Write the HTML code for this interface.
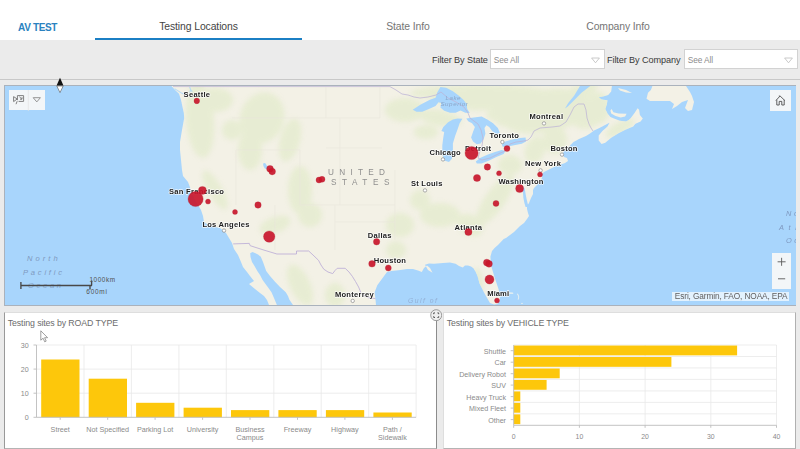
<!DOCTYPE html>
<html lang="en"><head><meta charset="utf-8"><title>AV TEST</title>
<style>
*{box-sizing:border-box;margin:0;padding:0}
html,body{width:800px;height:449px;overflow:hidden}
body{background:#ebebeb;font-family:"Liberation Sans",sans-serif;position:relative;color:#4a4a4a}
.hdr{position:absolute;left:0;top:0;width:800px;height:40px;background:#fff}
.brand{position:absolute;left:18px;top:21px;font-size:10px;font-weight:bold;color:#2a82c0;letter-spacing:-.35px;line-height:14px;white-space:nowrap}
.tab{position:absolute;top:19.5px;font-size:10.4px;line-height:14px;color:#757575;white-space:nowrap;text-align:center;width:207px;letter-spacing:-.1px}
.tab.on{color:#444}
.ul{position:absolute;left:95px;top:38.4px;width:207px;height:2.2px;background:#1b7fc4}
.bar{position:absolute;left:0;top:40px;width:800px;height:40.3px;background:#ebebeb;border-bottom:1.3px solid #c8c8c8}
.flabel{position:absolute;top:53.6px;font-size:9.15px;line-height:12px;color:#3a3a3a;white-space:nowrap;letter-spacing:-.1px}
.sel{position:absolute;top:49.2px;height:20px;background:#fff;border:1px solid #d2d2d2}
.sel span{position:absolute;left:2.8px;top:4.6px;font-size:8.3px;line-height:10px;color:#8c8c8c;letter-spacing:-.1px}
.sel svg{position:absolute;right:3.8px;top:6.6px}
.mapwrap{position:absolute;left:4px;top:85.3px;width:792.3px;height:220.4px;border:.8px solid #aab2bc;background:#a8d5fc;overflow:hidden}
.map{position:absolute;left:0;top:0;display:block}
.w{position:absolute;background:rgba(248,248,248,.94)}
.panel{position:absolute;top:312px;height:137px;background:#fff;border:1px solid #dedede;border-bottom:1px solid #b4b4b4;overflow:hidden}
.p1{border-left-color:#999;border-right-color:#8c8c8c}
.p2{border-right-color:#b0b0b0}
.panel svg{position:absolute;top:-1px}
.p1 svg{left:-.2px}
.p2 svg{left:-1.2px}
.ptitle{position:absolute;top:4px;left:2.6px;font-size:8.8px;line-height:12px;color:#6c6c6c;white-space:nowrap;letter-spacing:-.12px}
.attr{position:absolute;left:672.3px;top:291.8px;width:117px;height:9px;background:rgba(255,255,255,.68);font-size:8.3px;line-height:9px;color:#606060;white-space:nowrap;padding-left:2.5px;letter-spacing:-.12px}
</style></head><body>
<div class="hdr">
 <div class="brand">AV TEST</div>
 <div class="tab on" style="left:95px">Testing Locations</div>
 <div class="tab" style="left:304.5px">State Info</div>
 <div class="tab" style="left:514.5px">Company Info</div>
 <div class="ul"></div>
</div>
<div class="bar"></div>
<div class="flabel" style="left:432px">Filter By State</div>
<div class="sel" style="left:490px;width:115px"><span>See All</span><svg width="9" height="7" viewBox="0 0 9 7"><path d="M.6 1h7.8L4.5 5.8z" fill="none" stroke="#bdbdbd" stroke-width=".8"/></svg></div>
<div class="flabel" style="left:607px">Filter By Company</div>
<div class="sel" style="left:684px;width:113.6px"><span>See All</span><svg width="9" height="7" viewBox="0 0 9 7"><path d="M.6 1h7.8L4.5 5.8z" fill="none" stroke="#bdbdbd" stroke-width=".8"/></svg></div>

<div class="mapwrap"></div>
<div style="position:absolute;left:4.7px;top:86px;width:791.2px;height:219.2px;overflow:hidden">
<svg class="map" viewBox="5 86 791 219" width="791" height="219">
<defs><filter id="b" x="-30%" y="-30%" width="160%" height="160%"><feGaussianBlur stdDeviation="2.5"/></filter><filter id="s" x="-5%" y="-5%" width="110%" height="110%"><feGaussianBlur stdDeviation="0.45"/></filter><clipPath id="lc"><polygon points="171.5,86.0 175.0,90.0 179.0,93.8 181.0,100.0 182.5,107.0 183.8,113.0 184.2,118.0 182.0,130.0 180.0,142.0 180.0,150.0 181.0,160.0 182.0,170.0 183.0,176.0 188.0,182.0 191.0,190.0 194.0,198.0 198.0,205.0 201.0,210.0 203.0,216.0 204.0,222.0 210.0,226.0 220.0,228.0 226.0,233.0 229.0,238.0 232.0,243.0 234.0,249.0 238.0,255.0 241.0,262.0 243.0,267.0 247.0,272.0 250.0,276.0 254.0,281.0 249.0,284.0 255.0,289.0 260.0,293.0 264.0,296.0 267.0,300.0 269.0,305.0 376.0,305.0 375.5,299.5 374.6,292.3 377.3,285.2 382.6,278.0 387.0,272.0 391.5,271.0 396.0,270.5 400.4,270.0 407.0,269.0 413.0,269.0 418.0,270.5 421.8,272.0 424.0,268.0 427.0,265.6 430.0,268.0 432.5,272.7 428.0,270.0 425.0,264.7 429.0,263.5 434.0,263.8 443.0,263.0 450.0,262.5 455.6,263.8 459.0,266.0 462.8,267.4 465.0,265.5 468.0,265.6 471.0,266.5 473.4,268.3 475.5,271.5 477.5,276.0 478.6,280.0 479.5,283.4 481.8,288.0 484.0,292.5 486.8,297.5 490.0,303.0 494.0,304.5 497.5,304.0 499.5,301.0 500.0,297.7 499.5,293.0 498.4,288.8 496.5,283.0 494.8,278.0 493.0,272.0 491.0,265.6 490.4,256.7 492.0,251.0 494.8,247.8 498.0,245.0 503.7,239.0 506.0,238.0 510.0,235.0 514.0,232.0 518.0,228.0 520.0,226.0 524.0,223.0 527.0,219.0 529.0,216.0 528.0,213.0 527.0,209.0 527.0,206.0 529.0,203.0 531.0,198.0 533.0,194.0 533.0,190.0 534.0,188.0 536.0,186.0 538.0,184.0 540.0,181.0 542.0,178.0 542.0,174.0 544.0,172.0 548.0,170.0 552.0,168.0 556.0,166.0 561.0,164.5 565.0,163.0 568.0,161.0 567.0,158.0 564.0,157.0 562.0,154.0 564.5,151.0 568.0,148.0 570.5,145.0 573.5,142.0 579.0,139.0 586.0,136.0 590.0,133.5 594.0,130.5 599.4,128.1 606.0,124.4 609.5,122.8 607.5,126.5 602.4,131.0 598.7,135.5 598.7,140.6 601.6,144.0 605.3,142.8 611.2,137.7 618.5,133.3 625.9,129.6 633.2,126.6 635.4,123.7 640.6,121.5 642.8,118.6 639.9,114.9 639.1,109.7 637.6,108.3 634.7,112.7 631.0,117.8 628.8,120.0 625.9,121.5 620.0,120.8 614.0,118.6 610.4,117.0 607.5,113.4 605.3,109.0 606.8,104.6 607.5,100.2 601.6,99.4 598.7,97.2 603.0,96.5 608.2,95.0 611.2,91.4 611.9,86.0"/></clipPath></defs>
<rect x="5" y="86" width="791" height="219" fill="#a8d5fc"/>
<g filter="url(#s)">
<polygon points="171.5,86.0 175.0,90.0 179.0,93.8 181.0,100.0 182.5,107.0 183.8,113.0 184.2,118.0 182.0,130.0 180.0,142.0 180.0,150.0 181.0,160.0 182.0,170.0 183.0,176.0 188.0,182.0 191.0,190.0 194.0,198.0 198.0,205.0 201.0,210.0 203.0,216.0 204.0,222.0 210.0,226.0 220.0,228.0 226.0,233.0 229.0,238.0 232.0,243.0 234.0,249.0 238.0,255.0 241.0,262.0 243.0,267.0 247.0,272.0 250.0,276.0 254.0,281.0 249.0,284.0 255.0,289.0 260.0,293.0 264.0,296.0 267.0,300.0 269.0,305.0 376.0,305.0 375.5,299.5 374.6,292.3 377.3,285.2 382.6,278.0 387.0,272.0 391.5,271.0 396.0,270.5 400.4,270.0 407.0,269.0 413.0,269.0 418.0,270.5 421.8,272.0 424.0,268.0 427.0,265.6 430.0,268.0 432.5,272.7 428.0,270.0 425.0,264.7 429.0,263.5 434.0,263.8 443.0,263.0 450.0,262.5 455.6,263.8 459.0,266.0 462.8,267.4 465.0,265.5 468.0,265.6 471.0,266.5 473.4,268.3 475.5,271.5 477.5,276.0 478.6,280.0 479.5,283.4 481.8,288.0 484.0,292.5 486.8,297.5 490.0,303.0 494.0,304.5 497.5,304.0 499.5,301.0 500.0,297.7 499.5,293.0 498.4,288.8 496.5,283.0 494.8,278.0 493.0,272.0 491.0,265.6 490.4,256.7 492.0,251.0 494.8,247.8 498.0,245.0 503.7,239.0 506.0,238.0 510.0,235.0 514.0,232.0 518.0,228.0 520.0,226.0 524.0,223.0 527.0,219.0 529.0,216.0 528.0,213.0 527.0,209.0 527.0,206.0 529.0,203.0 531.0,198.0 533.0,194.0 533.0,190.0 534.0,188.0 536.0,186.0 538.0,184.0 540.0,181.0 542.0,178.0 542.0,174.0 544.0,172.0 548.0,170.0 552.0,168.0 556.0,166.0 561.0,164.5 565.0,163.0 568.0,161.0 567.0,158.0 564.0,157.0 562.0,154.0 564.5,151.0 568.0,148.0 570.5,145.0 573.5,142.0 579.0,139.0 586.0,136.0 590.0,133.5 594.0,130.5 599.4,128.1 606.0,124.4 609.5,122.8 607.5,126.5 602.4,131.0 598.7,135.5 598.7,140.6 601.6,144.0 605.3,142.8 611.2,137.7 618.5,133.3 625.9,129.6 633.2,126.6 635.4,123.7 640.6,121.5 642.8,118.6 639.9,114.9 639.1,109.7 637.6,108.3 634.7,112.7 631.0,117.8 628.8,120.0 625.9,121.5 620.0,120.8 614.0,118.6 610.4,117.0 607.5,113.4 605.3,109.0 606.8,104.6 607.5,100.2 601.6,99.4 598.7,97.2 603.0,96.5 608.2,95.0 611.2,91.4 611.9,86.0" fill="#f3f1e6"/>
<polygon points="646.5,98.7 648.0,92.8 650.9,89.9 652.4,86.0 686.0,86.0 690.0,92.0 692.0,96.0 694.0,102.0 692.0,110.0 688.0,111.0 685.0,108.0 688.0,100.0 682.0,102.0 677.0,106.0 672.0,109.0 674.0,104.0 670.0,101.0 660.0,101.0 650.0,101.0" fill="#f3f1e6"/>
<polygon points="611.6,109.0 613.4,112.3 618.5,113.6 626.6,113.8 625.1,116.6 620.7,117.6 615.6,116.0 611.2,113.4 610.4,110.5" fill="#f3f1e6"/>
<polygon points="618.0,88.0 626.0,90.0 632.0,93.0 626.0,92.5 620.0,90.5" fill="#f3f1e6"/>
<g clip-path="url(#lc)"><g filter="url(#b)" fill="#e0eac6" opacity=".6">
<ellipse cx="200" cy="120" rx="14" ry="38" transform="rotate(-5 200 120)"/>
<ellipse cx="215" cy="100" rx="18" ry="12" transform="rotate(0 215 100)"/>
<ellipse cx="262" cy="118" rx="22" ry="26" transform="rotate(20 262 118)"/>
<ellipse cx="250" cy="150" rx="12" ry="20" transform="rotate(0 250 150)"/>
<ellipse cx="290" cy="140" rx="10" ry="22" transform="rotate(15 290 140)"/>
<ellipse cx="300" cy="190" rx="12" ry="24" transform="rotate(0 300 190)"/>
<ellipse cx="215" cy="190" rx="7" ry="22" transform="rotate(-30 215 190)"/>
<ellipse cx="275" cy="225" rx="16" ry="8" transform="rotate(-20 275 225)"/>
<ellipse cx="310" cy="215" rx="12" ry="12" transform="rotate(0 310 215)"/>
<ellipse cx="440" cy="118" rx="22" ry="8" transform="rotate(10 440 118)"/>
<ellipse cx="470" cy="100" rx="40" ry="10" transform="rotate(5 470 100)"/>
<ellipse cx="530" cy="105" rx="45" ry="12" transform="rotate(-15 530 105)"/>
<ellipse cx="585" cy="115" rx="16" ry="14" transform="rotate(0 585 115)"/>
<ellipse cx="575" cy="95" rx="25" ry="8" transform="rotate(-25 575 95)"/>
<ellipse cx="555" cy="140" rx="12" ry="14" transform="rotate(0 555 140)"/>
<ellipse cx="620" cy="128" rx="16" ry="6" transform="rotate(-30 620 128)"/>
<ellipse cx="660" cy="94" rx="16" ry="6" transform="rotate(0 660 94)"/>
<ellipse cx="548" cy="112" rx="46" ry="20" transform="rotate(-12 548 112)"/>
<ellipse cx="598" cy="108" rx="12" ry="16" transform="rotate(0 598 108)"/>
<ellipse cx="480" cy="93" rx="70" ry="8" transform="rotate(0 480 93)"/>
<ellipse cx="515" cy="120" rx="20" ry="8" transform="rotate(0 515 120)"/>
<ellipse cx="535" cy="150" rx="10" ry="14" transform="rotate(20 535 150)"/>
<ellipse cx="510" cy="165" rx="12" ry="10" transform="rotate(0 510 165)"/>
<ellipse cx="495" cy="200" rx="10" ry="30" transform="rotate(35 495 200)"/>
<ellipse cx="470" cy="225" rx="14" ry="10" transform="rotate(30 470 225)"/>
<ellipse cx="440" cy="215" rx="20" ry="12" transform="rotate(0 440 215)"/>
<ellipse cx="400" cy="225" rx="14" ry="12" transform="rotate(0 400 225)"/>
<ellipse cx="420" cy="200" rx="10" ry="10" transform="rotate(0 420 200)"/>
<ellipse cx="478" cy="280" rx="5" ry="12" transform="rotate(-10 478 280)"/>
<ellipse cx="300" cy="285" rx="10" ry="22" transform="rotate(-25 300 285)"/>
<ellipse cx="335" cy="295" rx="10" ry="12" transform="rotate(0 335 295)"/>
<ellipse cx="405" cy="110" rx="20" ry="12" transform="rotate(0 405 110)"/>
<ellipse cx="426" cy="132" rx="12" ry="7" transform="rotate(0 426 132)"/>
<ellipse cx="396" cy="250" rx="10" ry="9" transform="rotate(0 396 250)"/>
<ellipse cx="232" cy="130" rx="10" ry="10" transform="rotate(0 232 130)"/>
</g></g>
<polygon points="276.9,305.0 274.0,298.0 271.5,292.3 267.0,286.0 262.6,279.9 260.0,275.0 257.3,271.0 254.5,266.0 252.0,262.0 250.5,257.0 250.2,253.2 252.5,252.0 255.5,253.2 258.0,254.5 260.8,256.7 263.0,262.0 266.2,271.0 270.0,276.0 275.0,281.7 280.0,287.0 285.8,292.3 288.0,296.0 289.3,299.5 293.0,305.0" fill="#a8d5fc"/>
<polygon points="412.7,109.8 420.3,104.7 429.9,99.7 435.6,97.8 437.2,92.6 440.4,86.9 446.2,87.8 452.9,91.3 458.6,95.5 463.4,99.7 466.7,104.1 467.2,108.9 469.7,113.1 465.3,112.7 460.5,110.4 455.7,112.7 450.0,112.7 444.2,110.8 440.4,107.4 441.4,103.1 438.5,102.2 435.6,106.0 428.9,108.9 422.2,111.8 416.5,111.8" fill="#a8d5fc"/>
<polygon points="462.4,118.8 459.6,123.2 457.7,129.0 455.2,135.7 452.9,143.4 452.9,151.0 451.9,158.7 449.0,162.1 444.2,160.6 442.3,153.9 442.3,145.3 443.3,137.6 444.2,131.9 441.4,130.9 443.3,127.1 448.1,122.3 452.9,119.4 457.7,118.5" fill="#a8d5fc"/>
<polygon points="466.3,118.5 473.9,117.5 481.6,116.5 487.3,119.4 493.1,123.2 497.9,128.0 499.8,132.8 496.5,134.2 492.1,130.9 489.2,127.1 486.4,125.2 484.5,128.0 485.4,133.8 483.5,139.5 480.6,143.4 476.8,144.3 473.0,141.4 471.1,137.6 473.0,131.9 474.9,127.1 472.0,123.2 468.2,121.3" fill="#a8d5fc"/>
<polygon points="475.8,161.5 480.6,157.7 487.3,154.8 495.0,152.0 501.7,150.1 505.5,151.0 503.6,153.9 496.9,156.8 489.2,160.6 481.6,163.5 476.8,163.5" fill="#a8d5fc"/>
<polygon points="501.7,144.3 505.5,141.4 512.2,139.5 519.9,138.0 525.6,137.6 526.0,141.4 521.8,143.7 514.1,145.3 506.5,146.8 502.7,146.8" fill="#a8d5fc"/>
<polygon points="590.3,86.0 581.5,92.8 574.1,100.2 567.5,106.8 565.0,108.5 568.2,103.1 574.1,95.8 580.0,86.0" fill="#a8d5fc"/>
<polygon points="523.0,186.0 524.8,189.0 525.6,194.0 526.6,199.0 527.8,204.0 528.5,207.0 525.6,207.0 524.4,203.0 523.4,198.0 523.0,193.0 522.2,189.0" fill="#a8d5fc"/>
<path d="M174.5 88.6L182.5 93.6L186.5 93.2M189.6 86.8L190.6 89.6L192.4 91.8M190.6 89.6L189.8 92.6" fill="none" stroke="#a8d5fc" stroke-width="1.1" opacity=".75"/>
<g fill="#eef3ee" opacity=".8"><ellipse cx="510.5" cy="293.2" rx="3" ry=".9"/><path d="M517.6 293.4q2.6 2.2 1 6.4l-1-.2q1.4-3.4-.8-5.6z"/><ellipse cx="522" cy="303.4" rx=".9" ry=".7"/></g>
<ellipse cx="265.2" cy="166" rx="1.6" ry="3.2" transform="rotate(-25 265.2 166)" fill="#a8d5fc"/>
<polyline points="233.2,243.9 249.3,243.4 250.2,245.7 263.0,249.8 276.9,254.0 296.5,254.0 296.5,251.0 308.7,251.0 313.0,255.0 318.5,260.3 321.0,265.0 323.8,269.2 328.0,272.0 332.7,273.6 335.0,270.5 337.2,268.3 345.2,268.3 349.0,272.0 352.3,276.3 355.5,281.5 358.6,287.0 360.0,290.5 361.3,294.0 365.0,296.0 368.4,297.7 375.5,298.6" fill="none" stroke="#b9a9d6" stroke-width=".8"/>
<polyline points="173.0,86.6 390.0,86.6 396.0,90.0 402.0,94.0 408.0,95.0 414.0,97.0 420.0,98.0 428.0,97.0 436.0,95.0 441.0,92.0 448.0,98.0 456.0,102.0 464.0,107.0 468.0,113.0 470.0,118.0 474.0,121.0 478.0,124.0 481.0,130.0 483.0,138.0 482.0,146.0 480.0,151.0 478.0,158.0 482.0,160.0 490.0,158.0 498.0,154.0 505.0,151.0 508.0,148.0 510.0,144.0 516.0,142.0 524.0,141.0 528.0,140.0 531.0,137.0 534.0,131.0 540.0,128.0 552.0,127.0 560.0,126.0 566.0,122.0 570.0,115.0 574.0,107.0 578.0,104.0 584.0,104.0 586.0,110.0 587.0,118.0 589.0,124.0 591.0,128.0 593.0,131.0" fill="none" stroke="#bdb4d6" stroke-width=".9" opacity=".85"/>
</g>
<g stroke="#eae6db" stroke-width=".6" fill="none"><path d="M326 87V118M326 118H380M380 87V118M326 148H382M340 118V205M300 205H395M300 150V205M236 150H300M236 150V205M395 170V240M335 205V250M335 222H395M275 205V250M232 118H326"/></g>
<g font-family="'Liberation Sans',sans-serif">
<g fill="#8a8a8a" font-size="8.2" opacity=".95"><text x="328" y="175.4" textLength="57" lengthAdjust="spacing">UNITED</text><text x="331" y="184.8" textLength="58.4" lengthAdjust="spacing">STATES</text></g>
<g fill="#7f99c0" font-style="italic" font-size="7.6"><text x="27" y="260.8" textLength="30.7">North</text><text x="23" y="274.8" textLength="39">Pacific</text><text x="28" y="288.3" textLength="33" opacity=".8">Ocean</text>
<text x="445.6" y="99.6" textLength="14.9" font-size="6.2" fill="#8ba6c9">Lake</text><text x="440.4" y="106.3" textLength="27.4" font-size="6.2" fill="#8ba6c9">Superior</text>
<text x="408" y="302.5" textLength="29" font-size="6.8" fill="#93b0d6">Gulf of</text>
<text x="786" y="216" textLength="12" font-size="7.4">No</text><text x="779" y="229.6" textLength="18" font-size="7.4">Atl</text><text x="786" y="243" textLength="12" font-size="7.4">Oc</text></g>
<circle cx="224" cy="230.6" r="1.7" fill="#fff" stroke="#8a8a8a" stroke-width=".7"/>
<circle cx="425" cy="190.4" r="1.7" fill="#fff" stroke="#8a8a8a" stroke-width=".7"/>
<circle cx="443" cy="159.4" r="1.7" fill="#fff" stroke="#8a8a8a" stroke-width=".7"/>
<circle cx="502.4" cy="142" r="1.7" fill="#fff" stroke="#8a8a8a" stroke-width=".7"/>
<circle cx="544" cy="123.4" r="1.7" fill="#fff" stroke="#8a8a8a" stroke-width=".7"/>
<circle cx="562" cy="154.6" r="1.7" fill="#fff" stroke="#8a8a8a" stroke-width=".7"/>
<circle cx="540.6" cy="170.4" r="1.7" fill="#fff" stroke="#8a8a8a" stroke-width=".7"/>
<circle cx="352.7" cy="300.9" r="1.7" fill="#fff" stroke="#8a8a8a" stroke-width=".7"/>
<g font-weight="bold" font-size="7.6" fill="#222" stroke="#fff" stroke-opacity=".85" stroke-width="1.3" stroke-linejoin="round" paint-order="stroke" style="paint-order:stroke">
<text x="183.6" y="97.0" textLength="26.4" lengthAdjust="spacing">Seattle</text>
<text x="169" y="193.7" textLength="55.0" lengthAdjust="spacing">San Francisco</text>
<text x="202.4" y="226.7" textLength="47.0" lengthAdjust="spacing">Los Angeles</text>
<text x="411" y="186.3" textLength="31.4" lengthAdjust="spacing">St Louis</text>
<text x="429.6" y="155.3" textLength="31.0" lengthAdjust="spacing">Chicago</text>
<text x="465" y="150.7" textLength="26.0" lengthAdjust="spacing">Detroit</text>
<text x="489.4" y="138.1" textLength="29.6" lengthAdjust="spacing">Toronto</text>
<text x="529.4" y="119.1" textLength="33.6" lengthAdjust="spacing">Montreal</text>
<text x="550.4" y="150.7" textLength="27.0" lengthAdjust="spacing">Boston</text>
<text x="525" y="166.3" textLength="36.0" lengthAdjust="spacing">New York</text>
<text x="498.4" y="183.7" textLength="45.0" lengthAdjust="spacing">Washington</text>
<text x="454.6" y="229.7" textLength="27.4" lengthAdjust="spacing">Atlanta</text>
<text x="367.8" y="238.0" textLength="23.7" lengthAdjust="spacing">Dallas</text>
<text x="373.7" y="263.3" textLength="32.3" lengthAdjust="spacing">Houston</text>
<text x="334.9" y="296.5" textLength="38.8" lengthAdjust="spacing">Monterrey</text>
<text x="487.3" y="295.7" textLength="21.7" lengthAdjust="spacing">Miami</text>
</g>
<g fill="#c9182d" fill-opacity=".92" stroke="#b01024" stroke-opacity=".5" stroke-width=".5" filter="url(#s)">
<circle cx="196.8" cy="100.9" r="2.8"/>
<circle cx="195.6" cy="199" r="7.6"/>
<circle cx="202.4" cy="190.4" r="4"/>
<circle cx="208" cy="201.6" r="2.5"/>
<circle cx="235" cy="212" r="2.5"/>
<circle cx="258" cy="205" r="3.2"/>
<circle cx="269.2" cy="236.6" r="5.7"/>
<circle cx="270" cy="168.8" r="3.4"/>
<circle cx="272.2" cy="171.6" r="3.3"/>
<circle cx="319" cy="180" r="3"/>
<circle cx="322" cy="179.3" r="3"/>
<circle cx="376.6" cy="241.8" r="3.2"/>
<circle cx="372" cy="263.8" r="3.3"/>
<circle cx="388.3" cy="268" r="3"/>
<circle cx="471.6" cy="153" r="6.6"/>
<circle cx="507" cy="148.6" r="3"/>
<circle cx="487.4" cy="167" r="3.2"/>
<circle cx="499" cy="173.3" r="2.5"/>
<circle cx="477" cy="178" r="3.6"/>
<circle cx="519.6" cy="188.6" r="4"/>
<circle cx="496" cy="203.4" r="3"/>
<circle cx="468.4" cy="232" r="3.6"/>
<circle cx="540" cy="174.4" r="2.5"/>
<circle cx="486.8" cy="262.6" r="3.4"/>
<circle cx="489" cy="263.8" r="3.4"/>
<circle cx="489.5" cy="279.5" r="4.5"/>
<circle cx="497" cy="300.5" r="2.5"/>
</g>
<g stroke="#484848" stroke-width="1.35" fill="none"><path d="M20.6 285.5H92M20.9 282V289M91.6 280.5V285.5M90 285.5V289.5"/></g>
<g fill="#505050" font-size="6.4"><text x="89.5" y="281.8" textLength="25.5">1000km</text><text x="86.3" y="294.4" textLength="20.5">600mi</text></g>
</g>
</svg>
</div>
<!-- map widgets -->
<div class="w" style="left:9px;top:90px;width:36px;height:20px">
 <svg width="36" height="21" viewBox="0 0 36 21"><line x1="19.3" y1="0" x2="19.3" y2="21" stroke="#e2e2e2" stroke-width=".7"/>
 <g fill="none" stroke="#808080" stroke-width="1"><path d="M8.4 5.6h6.2v5.8H9.6M8.4 5.6v4.6M4.6 6.6l3.6 2.4-3.6 2.6zM8.2 11.2l-1.2 3M10.4 6.8l2.6 2.4M11 9.2h2v-2"/></g>
 <path d="M24.2 7.7h7.2l-3.6 4.2z" fill="none" stroke="#8a8a8a" stroke-width=".9"/></svg>
</div>
<div class="w" style="left:770px;top:90px;width:21px;height:21px">
 <svg width="21" height="21" viewBox="0 0 21 21"><path d="M5.9 10.5L10.1 6l4.7 4.5M6.8 9.8v5.2h2.4v-3.6h2.6v3.6h2.4V9.8" fill="none" stroke="#505050" stroke-width=".9" stroke-linejoin="round"/><path d="M8.8 6h1.3" stroke="#555" stroke-width=".8"/></svg>
</div>
<div class="w" style="left:772px;top:253px;width:19px;height:36px">
 <svg width="19" height="36" viewBox="0 0 19 36"><path d="M5.6 8.8h8M9.6 4.8v8M6 25.8h7.2" stroke="#5a5a5a" stroke-width=".9" fill="none"/></svg>
</div>
<div class="attr">Esri, Garmin, FAO, NOAA, EPA</div>

<!-- resize cursor -->
<svg style="position:absolute;left:55px;top:77px" width="10" height="17" viewBox="0 0 10 17"><path d="M5 .8L8.4 8.6H1.6z" fill="#111"/><path d="M5 15.6L8.2 9H1.8z" fill="#fff" stroke="#555" stroke-width=".6"/></svg>

<div class="panel p1" style="left:4.2px;width:432.8px">
<svg class="c1" viewBox="5 312 432 137" width="432" height="137" font-family="'Liberation Sans',sans-serif">
<g stroke="#e9e9e9" stroke-width=".8">
<line x1="36.5" x2="416.1" y1="393.2" y2="393.2"/>
<line x1="36.5" x2="416.1" y1="369.1" y2="369.1"/>
<line x1="36.5" x2="416.1" y1="345.0" y2="345.0"/>
<line x1="84.0" x2="84.0" y1="345.0" y2="417.3"/>
<line x1="131.4" x2="131.4" y1="345.0" y2="417.3"/>
<line x1="178.9" x2="178.9" y1="345.0" y2="417.3"/>
<line x1="226.3" x2="226.3" y1="345.0" y2="417.3"/>
<line x1="273.8" x2="273.8" y1="345.0" y2="417.3"/>
<line x1="321.2" x2="321.2" y1="345.0" y2="417.3"/>
<line x1="368.7" x2="368.7" y1="345.0" y2="417.3"/>
<line x1="416.1" x2="416.1" y1="345.0" y2="417.3"/>
</g>
<rect x="41.2" y="359.5" width="38.3" height="57.8" fill="#fdc70b"/>
<rect x="88.7" y="378.7" width="38.3" height="38.6" fill="#fdc70b"/>
<rect x="136.1" y="402.8" width="38.3" height="14.5" fill="#fdc70b"/>
<rect x="183.6" y="407.7" width="38.3" height="9.6" fill="#fdc70b"/>
<rect x="231.0" y="410.1" width="38.3" height="7.2" fill="#fdc70b"/>
<rect x="278.4" y="410.1" width="38.3" height="7.2" fill="#fdc70b"/>
<rect x="325.9" y="410.1" width="38.3" height="7.2" fill="#fdc70b"/>
<rect x="373.4" y="412.5" width="38.3" height="4.8" fill="#fdc70b"/>
<g stroke="#bcbcbc" stroke-width=".9"><line x1="36.5" x2="36.5" y1="345.0" y2="417.3"/><line x1="36.5" x2="416.1" y1="417.3" y2="417.3"/>
<line x1="33.5" x2="36.5" y1="417.3" y2="417.3"/>
<line x1="33.5" x2="36.5" y1="393.2" y2="393.2"/>
<line x1="33.5" x2="36.5" y1="369.1" y2="369.1"/>
<line x1="33.5" x2="36.5" y1="345.0" y2="345.0"/>
<line x1="60.2" x2="60.2" y1="417.3" y2="419.8"/>
<line x1="107.7" x2="107.7" y1="417.3" y2="419.8"/>
<line x1="155.1" x2="155.1" y1="417.3" y2="419.8"/>
<line x1="202.6" x2="202.6" y1="417.3" y2="419.8"/>
<line x1="250.0" x2="250.0" y1="417.3" y2="419.8"/>
<line x1="297.5" x2="297.5" y1="417.3" y2="419.8"/>
<line x1="344.9" x2="344.9" y1="417.3" y2="419.8"/>
<line x1="392.4" x2="392.4" y1="417.3" y2="419.8"/>
</g>
<g fill="#8a8a8a" font-size="7.1" text-anchor="end">
<text x="28.6" y="419.9">0</text>
<text x="28.6" y="395.8">10</text>
<text x="28.6" y="371.7">20</text>
<text x="28.6" y="347.6">30</text>
</g>
<g fill="#8a8a8a" font-size="7.2" text-anchor="middle">
<text x="60.2" y="431.8">Street</text>
<text x="107.7" y="431.8">Not Specified</text>
<text x="155.1" y="431.8">Parking Lot</text>
<text x="202.6" y="431.8">University</text>
<text x="250.0" y="431.8">Business</text>
<text x="250.0" y="439.6">Campus</text>
<text x="297.5" y="431.8">Freeway</text>
<text x="344.9" y="431.8">Highway</text>
<text x="392.4" y="431.8">Path /</text>
<text x="392.4" y="439.6">Sidewalk</text>
</g>
</svg>
 <div class="ptitle">Testing sites by ROAD TYPE</div>
</div>
<div class="panel p2" style="left:443.2px;width:352.8px">
<svg class="c2" viewBox="443 312 353 137" width="353" height="137" font-family="'Liberation Sans',sans-serif">
<g stroke="#e9e9e9" stroke-width=".8">
<line x1="579.4" x2="579.4" y1="345" y2="425.3"/>
<line x1="645.1" x2="645.1" y1="345" y2="425.3"/>
<line x1="710.8" x2="710.8" y1="345" y2="425.3"/>
<line x1="776.5" x2="776.5" y1="345" y2="425.3"/>
<line x1="513.7" x2="776.5" y1="345.0" y2="345.0"/>
<line x1="513.7" x2="776.5" y1="356.5" y2="356.5"/>
<line x1="513.7" x2="776.5" y1="367.9" y2="367.9"/>
<line x1="513.7" x2="776.5" y1="379.4" y2="379.4"/>
<line x1="513.7" x2="776.5" y1="390.9" y2="390.9"/>
<line x1="513.7" x2="776.5" y1="402.4" y2="402.4"/>
<line x1="513.7" x2="776.5" y1="413.8" y2="413.8"/>
</g>
<rect x="513.7" y="345.55" width="223.4" height="9.8" fill="#fdc70b"/>
<rect x="513.7" y="357.02" width="157.7" height="9.8" fill="#fdc70b"/>
<rect x="513.7" y="368.49" width="46.0" height="9.8" fill="#fdc70b"/>
<rect x="513.7" y="379.96" width="32.9" height="9.8" fill="#fdc70b"/>
<rect x="513.7" y="391.43" width="6.6" height="9.8" fill="#fdc70b"/>
<rect x="513.7" y="402.90" width="6.6" height="9.8" fill="#fdc70b"/>
<rect x="513.7" y="414.37" width="6.6" height="9.8" fill="#fdc70b"/>
<g stroke="#bcbcbc" stroke-width=".9"><line x1="513.7" x2="513.7" y1="345" y2="425.3"/><line x1="513.7" x2="776.5" y1="425.3" y2="425.3"/>
<line x1="513.7" x2="513.7" y1="425.3" y2="427.8"/>
<line x1="579.4" x2="579.4" y1="425.3" y2="427.8"/>
<line x1="645.1" x2="645.1" y1="425.3" y2="427.8"/>
<line x1="710.8" x2="710.8" y1="425.3" y2="427.8"/>
<line x1="776.5" x2="776.5" y1="425.3" y2="427.8"/>
<line x1="510.70000000000005" x2="513.7" y1="350.7" y2="350.7"/>
<line x1="510.70000000000005" x2="513.7" y1="362.2" y2="362.2"/>
<line x1="510.70000000000005" x2="513.7" y1="373.7" y2="373.7"/>
<line x1="510.70000000000005" x2="513.7" y1="385.1" y2="385.1"/>
<line x1="510.70000000000005" x2="513.7" y1="396.6" y2="396.6"/>
<line x1="510.70000000000005" x2="513.7" y1="408.1" y2="408.1"/>
<line x1="510.70000000000005" x2="513.7" y1="419.6" y2="419.6"/>
</g>
<g fill="#8a8a8a" font-size="6.9" text-anchor="middle">
<text x="513.7" y="439.4">0</text>
<text x="579.4" y="439.4">10</text>
<text x="645.1" y="439.4">20</text>
<text x="710.8" y="439.4">30</text>
<text x="776.5" y="439.4">40</text>
</g>
<g fill="#8a8a8a" font-size="7.15" text-anchor="end">
<text x="506" y="353.6">Shuttle</text>
<text x="506" y="365.1">Car</text>
<text x="506" y="376.6">Delivery Robot</text>
<text x="506" y="388.0">SUV</text>
<text x="506" y="399.5">Heavy Truck</text>
<text x="506" y="411.0">Mixed Fleet</text>
<text x="506" y="422.5">Other</text>
</g></svg>
 <div class="ptitle">Testing sites by VEHICLE TYPE</div>
</div>
<!-- expand icon -->
<svg style="position:absolute;left:429.8px;top:308.5px" width="12.4" height="12.4" viewBox="-.2 -.2 12.4 12.4"><circle cx="6" cy="6" r="5.5" fill="#efefef" stroke="#858585" stroke-width=".8"/><path d="M3.5 5V3.7h1.3M7.2 3.7h1.3V5M8.5 7v1.3H7.2M4.8 8.3H3.5V7" fill="none" stroke="#555" stroke-width="1"/></svg>
<!-- mouse pointer -->
<svg style="position:absolute;left:40px;top:329.5px" width="9" height="13" viewBox="0 0 9 13"><path d="M.8.8v9.4l2.3-2 1.6 3.6 1.5-.7-1.6-3.4h3z" fill="#fff" stroke="#777" stroke-width=".7" stroke-linejoin="round"/></svg>
</body></html>
